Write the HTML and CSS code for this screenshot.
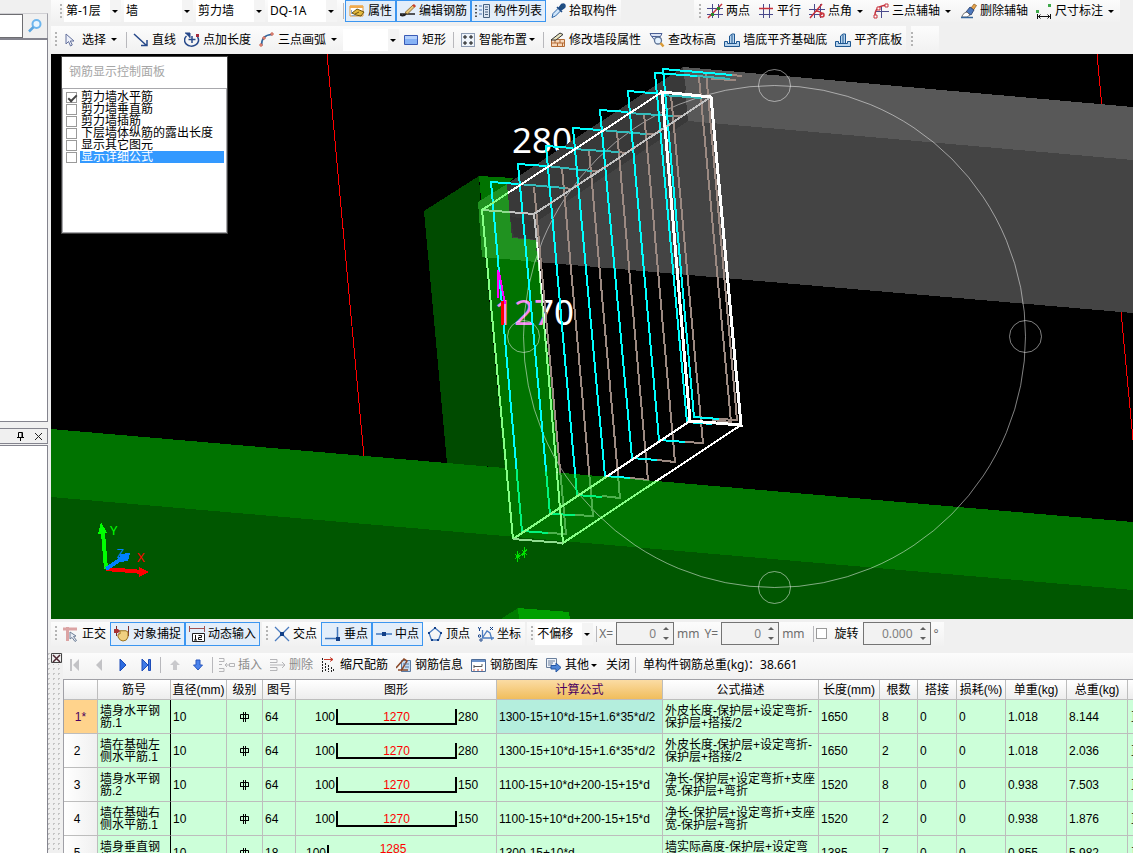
FILE: index.html
```html
<!DOCTYPE html>
<html lang="zh-CN">
<head>
<meta charset="utf-8">
<title>单构件钢筋</title>
<link rel="stylesheet" href="styles.css">
</head>
<body>
<div class="app">
  <aside class="side">
    <div class="search">
      <input type="text" aria-label="搜索">
      <button type="button" aria-label="查找"><svg class="ic" viewBox="0 0 16 16"><circle cx="9.500" cy="6" r="4" fill="#eaf6ff" stroke="#6db6ee" stroke-width="2"/><path d="M6.500 9 2 13.500" stroke="#5aa5e0" stroke-width="2.500"/></svg></button>
    </div>
    <div class="side-list"></div>
    <div class="side-head">
      <button type="button" aria-label="固定"><svg viewBox="0 0 9 9"><path d="M2.500 5V.500h4V5M1 5.500h7M4.500 6v3" stroke="#000" fill="none"/><path d="M6 1v4" stroke="#000" stroke-width="1"/></svg></button>
      <button type="button" aria-label="关闭面板"><svg viewBox="0 0 9 9"><path d="M1 1l7 7M8 1 1 8" stroke="#222" fill="none"/></svg></button>
    </div>
    <div class="side-body"></div>
  </aside>

  <main class="main">
    <div class="row row-top">
      <div class="bar bar-first">
        <i class="grip"></i>
        <span class="combo floor"><select aria-label="楼层"><option>第-1层</option></select></span>
        <span class="combo kind"><select aria-label="构件类"><option>墙</option></select></span>
        <span class="combo kind"><select aria-label="构件类型"><option>剪力墙</option></select></span>
        <span class="combo kind"><select aria-label="构件"><option>DQ-1A</option></select></span>
        <i class="sep"></i>
        <button type="button" class="on"><svg class="ic" viewBox="0 0 16 16"><path d="M1 3h13v10H1z" fill="#fff" stroke="#e39a3b"/><path d="M1 2.500h13v2.500H1z" fill="#f2ab4c"/><path d="M2.500 7v4M2.500 12.500h4" stroke="#8aa6c8"/><path d="M3 10l5-4 7 3-3 4-5-1z" fill="#e4b93c" stroke="#6b5310"/><path d="M6 11l4-2" stroke="#6b5310"/></svg>属性</button>
        <button type="button" class="on"><svg class="ic" viewBox="0 0 16 16"><path d="M0 11h15M0 12q4 2 7-2" stroke="#222" fill="none" stroke-width="1.500"/><path d="M5 9.500 13 2l2 1.500L7.500 11z" fill="#e9c774" stroke="#7b5a22" stroke-width=".8"/><path d="M12 2.500l2-1.500 2 2-1.500 1.500z" fill="#c8402c"/></svg>编辑钢筋</button>
        <button type="button" class="on"><svg class="ic" viewBox="0 0 16 16"><path d="M1 2v12" stroke="#555" stroke-width="2" stroke-dasharray="1.500 2"/><path d="M4 3h3M4 7h3M4 11h3" stroke="#4b77b5"/><path d="M8.500 1.500h6v13h-6z" fill="#dce6f3" stroke="#47617f"/><path d="M10 4h3M10 6.500h3M10 9h3M10 11.500h3" stroke="#47617f"/></svg>构件列表</button>
        <button type="button"><svg class="ic" viewBox="0 0 16 16"><path d="M2 14.500l1-4L8.500 5l2.500 2.500L5.500 13z" fill="#cfe5fa" stroke="#2c66a8"/><path d="M7 4l5 5M9 5l2.500-3.500q2-1 3 0 1 1.500 0 3L11 7z" fill="#22507f" stroke="#1d4b86" stroke-width="1.500"/></svg>拾取构件</button>
      </div>
      <div class="bar">
        <i class="grip"></i>
        <button type="button"><svg class="ic" viewBox="0 0 16 16"><path d="M5.500 1v14M11.500 1v14M0 5.500h16M0 11.500h16" stroke="#4a4a8c"/><path d="M1 15 15 1" stroke="#c8323c" stroke-width="1.500"/><path d="M4 10h3v3H4zM10 4h3v3h-3z" fill="#2c8a2c"/></svg>两点</button>
        <button type="button"><svg class="ic" viewBox="0 0 16 16"><path d="M5.500 1v14M11.500 1v14" stroke="#4a4a8c"/><path d="M1 5.500h14" stroke="#c8323c" stroke-width="1.500"/><path d="M1 11.500h14" stroke="#4a4a8c"/></svg>平行</button>
        <button type="button" class="drop"><svg class="ic" viewBox="0 0 16 16"><path d="M5.500 1v14M11.500 1v14M0 6.500h16M0 11.500h11" stroke="#4a4a8c"/><path d="M1 15 13 1M7 8q5 0 6 4" stroke="#c8323c" stroke-width="1.500" fill="none"/><circle cx="13" cy="12" r="2" fill="none" stroke="#c8323c" stroke-width="1.500"/></svg>点角</button>
        <button type="button" class="drop"><svg class="ic" viewBox="0 0 16 16"><path d="M8.500 3v12M3 8.500h13" stroke="#4a4a8c"/><path d="M2 14Q1 3 14 2" stroke="#c8323c" stroke-width="1.500" fill="none"/><path d="M1 12h3v3H1zM4 4h3v3H4zM12 1h3v3h-3z" fill="#fff" stroke="#c8323c"/></svg>三点辅轴</button>
        <button type="button"><svg class="ic" viewBox="0 0 16 16"><path d="M10 5l3-4 2.500 1.500L12.500 7z" fill="#e5a24c" stroke="#8b5a1c" stroke-width=".7"/><path d="M5 9l4-5 4 3-3 5z" fill="#4d78bd" stroke="#243a66" stroke-width=".8"/><path d="M1 13q2-4 5-4l3 3q-2 3-8 2z" fill="#fff" stroke="#555" stroke-width=".8"/><path d="M0 14.500h12" stroke="#35659b" stroke-width="1.500"/></svg>删除辅轴</button>
        <button type="button" class="drop"><svg class="ic" viewBox="0 0 16 16"><path d="M12 1h3v3h-3zM0 7h3v3H0z" fill="#3fa94a"/><path d="M1.500 11v5M14.500 11v5M2 13.500h12M4.500 11.500l-2 2 2 2M11.500 11.500l2 2-2 2" stroke="#111" fill="none"/></svg>尺寸标注</button>
      </div>
    </div>

    <div class="row row-draw">
      <div class="bar">
        <i class="grip"></i>
        <button type="button" class="drop"><svg class="ic" viewBox="0 0 16 16"><path d="M3 2v10l2.500-2.500 2 4.500 1.800-1-2-4H11z" fill="#eef1fa" stroke="#63709c"/></svg>选择</button>
        <i class="sep"></i>
        <button type="button"><svg class="ic" viewBox="0 0 16 16"><path d="M1 2l12 11M8 13.500h6V8" stroke="#27498a" stroke-width="1.500" fill="none"/></svg>直线</button>
        <button type="button"><svg class="ic" viewBox="0 0 16 16"><path d="M8 4v7M4.500 7.500h7M13.500 5a7 6 0 1 1-11-1" stroke="#27498a" stroke-width="1.500" fill="none"/><path d="M1 1h5v5" stroke="#27498a" fill="#27498a"/><path d="M12 2h3v3h-3z" fill="#a52a3c"/></svg>点加长度</button>
        <button type="button" class="drop"><svg class="ic" viewBox="0 0 16 16"><path d="M2.500 14Q2 3 13 2.500" stroke="#34689e" stroke-width="1.500" fill="none"/><path d="M1 12h2v2H1zM4 5h2v2H4zM12 1h2v2h-2z" fill="#fff" stroke="#c8503c"/></svg>三点画弧</button>
        <span class="combo blank"><select aria-label="绘制选项"><option></option></select></span>
        <button type="button"><svg class="ic" viewBox="0 0 16 16"><path d="M1.500 3.500h13v9h-13z" fill="#86b2f5" stroke="#3a5bb5"/><path d="M2 4h12v3H2z" fill="#b4d0fb"/></svg>矩形</button>
        <i class="sep"></i>
        <button type="button" class="drop tight"><svg class="ic" viewBox="0 0 16 16"><path d="M1.500 1.500h13v13h-13z" fill="#eef4fb" stroke="#27406d" stroke-dasharray="1 1"/><path d="M5 3v4M3 5h4M11 3v4M9 5h4M5 9v4M3 11h4M11 9v4M9 11h4" stroke="#111"/></svg>智能布置</button>
        <i class="sep"></i>
        <button type="button"><svg class="ic" viewBox="0 0 16 16"><path d="M1.500 7.500h13v7h-13z" fill="#f7d9bd" stroke="#b36a35"/><path d="M1 11h14M5 8v3M10 8v3M7.500 11v4M12.500 11v4" stroke="#b36a35"/><path d="M1 8 10 1l3 1.500L6 8z" fill="#e9e4c0" stroke="#333"/></svg>修改墙段属性</button>
        <button type="button"><svg class="ic" viewBox="0 0 16 16"><path d="M1 1.500h12l-1.500 3H2.500zM3 5l3.500 4L9 5" fill="#dce4f5" stroke="#4a5f95"/><circle cx="9" cy="8.500" r="3.500" fill="#e5f2ff" stroke="#5d7396" stroke-width="1.300"/><path d="M11.500 11l3 3.500" stroke="#d99a35" stroke-width="2.500"/></svg>查改标高</button>
        <button type="button"><svg class="ic" viewBox="0 0 16 16"><path d="M5.500 11V4L8 2h2.500v9M.500 9.500h3v2h9v-2h3v5H.500z" fill="#b8d4ee" stroke="#1d5690"/><path d="M8 3v8" stroke="#1d5690"/></svg>墙底平齐基础底</button>
        <button type="button"><svg class="ic" viewBox="0 0 16 16"><path d="M5.500 11V4L8 2h2.500v9M.500 9.500h3v2h9v-2h3v5H.500z" fill="#b8d4ee" stroke="#1d5690"/><path d="M8 3v8" stroke="#1d5690"/></svg>平齐底板</button>
      </div>
      <div class="bar stub"><i class="grip"></i></div>
    </div>

    <section class="view">
      <svg class="scene" viewBox="51 54 1082 565" preserveAspectRatio="xMinYMin slice" shape-rendering="crispEdges">
        <defs>
          <clipPath id="ground"><path d="M51 429 1133 522V619H51z"/></clipPath>
          <clipPath id="greens"><path d="M51 429 1133 522V619H51zM478 211 507 184 512 238 536 240 560 472 500 470z"/></clipPath>
          <linearGradient id="split" gradientUnits="userSpaceOnUse" x1="543" y1="0" x2="544" y2="0"><stop offset="0" stop-color="#f48af0"/><stop offset="1" stop-color="#fff"/></linearGradient>
        </defs>
        <rect x="51" y="54" width="1082" height="565" fill="#000"/>
        <path d="M327 54 364 457M1097 54 1133 440" class="axis-line"/>
        <path d="M51 429 1133 522V619H51z" fill="#007300"/>
        <path d="M51 497 1133 590V619H51z" fill="#005700"/>
        <path d="M424 211 479 176 481 210 505 468 447 463z" fill="#004b00"/>
        <path d="M479 176 514 178 507 184 512 238 536 240 561 474 505 470z" fill="#007300"/>
        <path d="M501 619 518 608 519 619z" fill="#007c00"/>
        <path d="M518 608 569 612 570 619H519z" fill="#00a000"/>
        <path d="M683 67 1133 107V160L688 121z" fill="#585858"/>
        <path d="M688 121 1133 160V313L537 262 535 240 512 238z" fill="#444"/>
        <path d="M507 184 683 67 688 121 512 238z" fill="#393939"/>
        <path d="M514 237 510 216 536 222 537 240z" fill="#343434"/>
        <path d="M478 202 507 184 512 238 536 240 537 262 482 257z" fill="#209220"/>
        <g class="digits" shape-rendering="auto">
          <text x="512" y="153" fill="#fff">280</text>
          <text x="494" y="325" fill="url(#split)">1270</text>
        </g>
        <path d="M507 184 683 67 686 90 535 190z" fill="#393939"/>
        <g class="orbit" shape-rendering="auto">
          <circle cx="774.500" cy="336.500" r="251"/><circle cx="774.500" cy="85.500" r="16"/><circle cx="1025.500" cy="336.500" r="16"/><circle cx="774.500" cy="587.500" r="16"/><circle cx="523.500" cy="336.500" r="16"/>
        </g>
        <g id="bars" class="bars">
          <path class="back" d="M534 187 566 534 548 533M562 168 593 516 575 515M589 150 620 498 602 496M617 132 648 480 630 478M644 113 675 462 657 460M671 95 703 443 685 442M699 77 731 422 712 420M706 72 737 420 719 419M565 188 571 189M592 171 598 171M619 152 625 153M646 134 654 134M673 116 681 116M732 75 742 76M711 79 736 80"/>
          <path class="dim" d="M518 184 565 188M546 166 592 171M573 149 619 152M600 130 646 134M628 113 673 116M662 95 702 98M697 76 730 79"/>
          <path class="front" d="M518 184 491 182 522 531 548 533M546 166 518 164 550 514 575 515M573 148 546 146 577 495 602 497M600 130 573 128 605 476 630 478M628 112 600 110 632 458 657 460M662 94 628 91 659 440 685 442M697 76 655 73 687 422 712 424M732 75 663 69 694 417 719 419"/>
        </g>
        <use href="#bars" class="bars-low" clip-path="url(#ground)"/>
        <g id="box" class="box">
          <path class="soft" d="M482 210 534 214 711 97M534 214 537 242"/>
          <path d="M513 539 482 210 662 92M537 242 563 543 741 425M513 539 690 421"/>
          <path class="bold" d="M662 92 711 97 741 425 690 421z"/>
          <path class="soft" d="M513 539 563 543"/>
        </g>
        <use href="#box" class="box-low" clip-path="url(#greens)"/>
        <path d="M498 270V298M499 272 505 304" stroke="#f0f" stroke-width="2" fill="none"/>
        <path d="M502 301 503 325" stroke="#f00" stroke-width="3"/>
        <path d="M515 554l5 5M520 553l-5 6M517.500 551v11M517 558l8-6M522 550l5 5M527 549l-5 7M524.500 547v11" stroke="#00e000" fill="none"/>
        <g class="triad">
          <path d="M106 569 103 533" stroke="#0f0" stroke-width="4"/><path d="M101 522 107 533 98 534z" fill="#0f0"/>
          <path d="M106 569 143 572" stroke="#f00" stroke-width="4"/><path d="M139 567 149 572 139 577z" fill="#f00"/>
          <path d="M106 569 124 557" stroke="#0080ff" stroke-width="4"/><path d="M120 554 130 553 128 561 120 562z" fill="#0080ff"/>
          <text x="110" y="535" fill="#0f0">Y</text><text x="117" y="558" fill="#0080ff">Z</text><text x="137" y="562" fill="#f00">X</text>
        </g>
      </svg>
      <div class="panel">
        <h2>钢筋显示控制面板</h2>
        <div class="checks">
          <label><input type="checkbox" checked><span>剪力墙水平筋</span></label>
          <label><input type="checkbox"><span>剪力墙垂直筋</span></label>
          <label><input type="checkbox"><span>剪力墙插筋</span></label>
          <label><input type="checkbox"><span>下层墙体纵筋的露出长度</span></label>
          <label><input type="checkbox"><span>显示其它图元</span></label>
          <label class="sel"><input type="checkbox"><span>显示详细公式</span></label>
        </div>
      </div>
    </section>

    <div class="row row-snap">
      <div class="bar">
        <i class="grip"></i>
        <button type="button"><svg class="ic" viewBox="0 0 16 16"><path d="M0 3h14M4.500 1v14" stroke="#dba3a3" stroke-width="3"/><path d="M7 6v7l2-1.500 3 4 1.500-1-3-4L13 10z" fill="#e8edf5" stroke="#6e7e96"/></svg>正交</button>
        <button type="button" class="on"><svg class="ic" viewBox="0 0 16 16"><path d="M2.500 0v10M14.500 0v10M0 5h6" stroke="#7a3030"/><path d="M0 3h4l2 2-2 2H0z" fill="#a33"/><path d="M4 9q0-2 2-1V5q1-1 2 0 1-1 2 0 1-1 2 0 2 0 2 2v4q-1 4-5 4-3 0-5-4z" fill="#f0d080" stroke="#9c7420"/></svg>对象捕捉</button>
        <button type="button" class="on"><svg class="ic" viewBox="0 0 16 16"><path d="M.500 0v6M15.500 0v6M1 2.500h14" stroke="#a05050"/><path d="M3.500 7.500h12v8h-12z" fill="#fff" stroke="#222"/><path d="M6.500 9v5M5 14h3M9.500 9.500h3v2h-3v2H13" stroke="#111" fill="none"/></svg>动态输入</button>
      </div>
      <div class="bar">
        <i class="grip"></i>
        <button type="button"><svg class="ic" viewBox="0 0 16 16"><path d="M1 1l14 14M15 1 1 15" stroke="#4b7cc0" stroke-width="1.300"/><path d="M6 6h4v4H6z" fill="#123f87"/></svg>交点</button>
        <button type="button" class="on"><svg class="ic" viewBox="0 0 16 16"><path d="M12.500 1v11M0 12.500h15" stroke="#3f76bc" stroke-width="1.500"/><path d="M11 11h4v4h-4z" fill="#123f87"/></svg>垂点</button>
        <button type="button" class="on"><svg class="ic" viewBox="0 0 16 16"><path d="M0 8h16" stroke="#3f76bc" stroke-width="1.500"/><path d="M6 6h4v4H6z" fill="#123f87"/></svg>中点</button>
        <button type="button"><svg class="ic" viewBox="0 0 16 16"><path d="M8 2l6 5-2.500 7h-7L2 7z" fill="none" stroke="#4b7cc0" stroke-width="1.300"/><path d="M7 1h2v2H7zM1 6h2v2H1zM13 6h2v2h-2zM4 13h2v2H4zM10 13h2v2h-2z" fill="#123f87"/></svg>顶点</button>
        <button type="button"><svg class="ic" viewBox="0 0 16 16"><path d="M4.500 4v8H16M5 11l4-6 3 2 2 7" stroke="#4b7cc0" fill="none" stroke-width="1.300"/><path d="M0 1l1.500 2L3 1M1.500 3v2M12 1l3 3M15 1l-3 3" stroke="#123f87" fill="none"/><circle cx="1.500" cy="10" r="1.200" fill="none" stroke="#123f87"/><circle cx="3" cy="14" r="1.200" fill="none" stroke="#123f87"/></svg>坐标</button>
      </div>
      <div class="bar">
        <i class="grip"></i>
        <span class="combo shift"><select aria-label="偏移方式"><option>不偏移</option></select></span>
        <i class="sep"></i>
        <label class="num">X=<span class="spin"><input type="text" value="0"></span>mm</label>
        <label class="num">Y=<span class="spin"><input type="text" value="0"></span>mm</label>
        <i class="sep"></i>
        <label class="rot"><input type="checkbox"><span>旋转</span></label>
        <label class="num"><span class="spin wide"><input type="text" value="0.000" aria-label="旋转角度"></span>°</label>
      </div>
    </div>

    <section class="dock">
      <div class="dock-grip"><button type="button" aria-label="关闭"><svg viewBox="0 0 11 11"><path d="M.500.500h10v9H.500z" fill="#eee" stroke="#444"/><path d="M2 2l7 7M9 2 2 9" stroke="#4b2630" stroke-width="1.500"/></svg></button></div>
      <div class="dock-main">
        <div class="bar edit">
          <button type="button" disabled aria-label="首行"><svg class="ic" viewBox="0 0 16 16"><path d="M3 2h2v12H3zM12 2v12L6 8z" fill="#c3c3c6"/></svg></button>
          <button type="button" disabled aria-label="上一行"><svg class="ic" viewBox="0 0 16 16"><path d="M11 2v12L5 8z" fill="#c3c3c6"/></svg></button>
          <button type="button" aria-label="下一行"><svg class="ic" viewBox="0 0 16 16"><path d="M5 2v12l6-6z" fill="#2d6ce0" stroke="#1c4bb8"/></svg></button>
          <button type="button" aria-label="末行"><svg class="ic" viewBox="0 0 16 16"><path d="M3 2v12l6-6zM9.500 2.500h2v11h-2z" fill="#3f7ae6" stroke="#1c4bb8"/></svg></button>
          <i class="sep"></i>
          <button type="button" disabled aria-label="上移"><svg class="ic" viewBox="0 0 16 16"><path d="M8 3l5 5h-3v5H6V8H3z" fill="#c9c9cc"/></svg></button>
          <button type="button" aria-label="下移"><svg class="ic" viewBox="0 0 16 16"><path d="M7 13l4.500-5H9V3H5v5H2.500z" fill="#4b83ec" stroke="#2857be"/></svg></button>
          <i class="sep"></i>
          <button type="button" disabled><svg class="ic" viewBox="0 0 16 16"><path d="M0 1.500h5v3H0M0 7.500h3M0 11.500h5v3H0M6 8h5M6 8l2-2M6 8l2 2M10.500 6.500h5v3h-5z" stroke="#b5b5b8" fill="none"/></svg>插入</button>
          <button type="button" disabled><svg class="ic" viewBox="0 0 16 16"><path d="M0 2.500h7v3H0M0 10.500h7v3H0M0 8h15M12 5l3 3-3 3" stroke="#b5b5b8" fill="none"/></svg>删除</button>
          <button type="button"><svg class="ic" viewBox="0 0 16 16"><path d="M1.500 1v14M4.500 6v9M7.500 8v7M10.500 10v5M12.500 12v3" stroke="#222" stroke-dasharray="2 1"/><path d="M3 2.500h9M9 .500l3 2-3 2" stroke="#c63a2a" fill="none"/></svg>缩尺配筋</button>
          <button type="button"><svg class="ic" viewBox="0 0 16 16"><path d="M5.500 3.500h9v11h-9z" fill="#c5dcf2" stroke="#5a7ba5"/><path d="M0 11 8 2l3 2-6 10M2 13h10" fill="none" stroke="#8b4a2a" stroke-width="1.500"/><path d="M7 7h6M9 10h4" stroke="#5a7ba5"/></svg>钢筋信息</button>
          <button type="button"><svg class="ic" viewBox="0 0 16 16"><path d="M.500 2.500h14v12H.500z" fill="#fff" stroke="#4f6d98"/><path d="M1 3h13v2H1z" fill="#6b93cc"/><path d="M3 8v3M3 9.500h8V7" stroke="#555" fill="none"/><path d="M2 13h11" stroke="#c8503c" stroke-dasharray="2 2"/></svg>钢筋图库</button>
          <button type="button" class="drop tight"><svg class="ic" viewBox="0 0 16 16"><path d="M.500 1.500h10v9h-10z" fill="#eef3fa" stroke="#6a7f9c"/><path d="M2 4h7M2 6h5M2 8h4" stroke="#6a7f9c"/><path d="M5 8.500h5V6l5 4.500-5 4.500v-3H5z" fill="#4f86d8" stroke="#2456a3"/></svg>其他</button>
          <button type="button">关闭</button>
          <i class="sep"></i>
          <span class="total">单构件钢筋总重(kg)：38.661</span>
        </div>
        <div class="grid">
          <table>
            <colgroup><col class="c34"><col class="c73"><col class="c56"><col class="c36"><col class="c33"><col class="c201"><col class="c166"><col class="c156"><col class="c61"><col class="c38"><col class="c39"><col class="c49"><col class="c61"><col class="c61"><col class="c90"></colgroup>
            <thead><tr><th></th><th>筋号</th><th>直径(mm)</th><th>级别</th><th>图号</th><th>图形</th><th class="hot">计算公式</th><th>公式描述</th><th>长度(mm)</th><th>根数</th><th>搭接</th><th>损耗(%)</th><th>单重(kg)</th><th>总重(kg)</th><th></th></tr></thead>
            <tbody>
              <tr><th class="cur">1*</th><td class="name">墙身水平钢<br>筋.1</td><td>10</td><td class="mid"><svg class="phi" viewBox="0 0 9 10"><path d="M3.500 0v10M5.500 0v10M.500 2.500h8M0 6.500h9M.500 2.500v4M8.500 2.500v4"/></svg></td><td>64</td><td><div class="shape"><span>100</span><b>1270</b><span>280</span></div></td><td class="focus">1300-15+10*d-15+1.6*35*d/2</td><td>外皮长度-保护层+设定弯折-<br>保护层+搭接/2</td><td>1650</td><td>8</td><td>0</td><td>0</td><td>1.018</td><td>8.144</td><td class="cut">直筋</td></tr>
              <tr><th>2</th><td class="name">墙在基础左<br>侧水平筋.1</td><td>10</td><td class="mid"><svg class="phi" viewBox="0 0 9 10"><path d="M3.500 0v10M5.500 0v10M.500 2.500h8M0 6.500h9M.500 2.500v4M8.500 2.500v4"/></svg></td><td>64</td><td><div class="shape"><span>100</span><b>1270</b><span>280</span></div></td><td>1300-15+10*d-15+1.6*35*d/2</td><td>外皮长度-保护层+设定弯折-<br>保护层+搭接/2</td><td>1650</td><td>2</td><td>0</td><td>0</td><td>1.018</td><td>2.036</td><td class="cut">直筋</td></tr>
              <tr><th>3</th><td class="name">墙身水平钢<br>筋.2</td><td>10</td><td class="mid"><svg class="phi" viewBox="0 0 9 10"><path d="M3.500 0v10M5.500 0v10M.500 2.500h8M0 6.500h9M.500 2.500v4M8.500 2.500v4"/></svg></td><td>64</td><td><div class="shape"><span>100</span><b>1270</b><span>150</span></div></td><td>1100-15+10*d+200-15+15*d</td><td>净长-保护层+设定弯折+支座<br>宽-保护层+弯折</td><td>1520</td><td>8</td><td>0</td><td>0</td><td>0.938</td><td>7.503</td><td class="cut">直筋</td></tr>
              <tr><th>4</th><td class="name">墙在基础右<br>侧水平筋.1</td><td>10</td><td class="mid"><svg class="phi" viewBox="0 0 9 10"><path d="M3.500 0v10M5.500 0v10M.500 2.500h8M0 6.500h9M.500 2.500v4M8.500 2.500v4"/></svg></td><td>64</td><td><div class="shape"><span>100</span><b>1270</b><span>150</span></div></td><td>1100-15+10*d+200-15+15*d</td><td>净长-保护层+设定弯折+支座<br>宽-保护层+弯折</td><td>1520</td><td>2</td><td>0</td><td>0</td><td>0.938</td><td>1.876</td><td class="cut">直筋</td></tr>
              <tr><th>5</th><td class="name">墙身垂直钢<br>筋.1</td><td>10</td><td class="mid"><svg class="phi" viewBox="0 0 9 10"><path d="M3.500 0v10M5.500 0v10M.500 2.500h8M0 6.500h9M.500 2.500v4M8.500 2.500v4"/></svg></td><td>18</td><td><div class="shape ell"><span>100</span><b>1285</b></div></td><td>1300-15+10*d</td><td>墙实际高度-保护层+设定弯<br>折</td><td>1385</td><td>7</td><td>0</td><td>0</td><td>0.855</td><td>5.982</td><td class="cut">直筋</td></tr>
            </tbody>
          </table>
        </div>
      </div>
    </section>
  </main>
</div>
</body>
</html>
```

FILE: styles.css
```css
* { box-sizing: border-box; }
html, body { height: 100%; margin: 0; }
body {
  background: #f0f0f0;
  color: #000;
  font: 12px/16px "Noto Sans", "Noto Sans CJK SC", sans-serif;
  overflow: hidden;
}
button, input, select { font: inherit; color: inherit; margin: 0; }
button { background: none; border: 0; padding: 0; }
.app { display: flex; height: 100vh; }

/* left dock */
.side { flex: 0 0 48px; min-width: 0; display: flex; flex-direction: column; padding-top: 13px; }
.search { display: flex; height: 25px; border-right: 1px solid #a0a0a8; border-top: 1px solid #d0d0d4; }
.search input { flex: 1; width: 0; min-width: 0; border: 1px solid #6e6e72; border-left: 0; background: #fff; }
.search button { flex: 0 0 24px; display: grid; place-items: center; }
.side-list { flex: 0 0 384px; background: #fff; border: 1px solid #84848e; border-left: 0; border-top-width: 2px; }
.side-head { display: flex; align-items: center; justify-content: flex-end; gap: 9px; height: 16px; margin-top: 6px; padding-right: 4px; border: 1px solid #84848e; border-left: 0; }
.side-head svg { display: block; width: 9px; height: 9px; }
.side-body { flex: 1; margin-top: 1px; background: #fff; border: 1px solid #84848e; border-left: 0; border-bottom: 0; }

.main { flex: 1; min-width: 0; display: flex; flex-direction: column; }
.row { display: flex; padding-left: 3px; flex: none; }
.row-top { height: 26px; justify-content: space-between; padding-right: 13px; }
.row-top .bar { height: 22px; }
.row-top .bar-first { padding-left: 9px; }
.row-top .on { border-top-color: transparent; }
.row-draw { height: 28px; padding-bottom: 1px; gap: 5px; }
.row-draw .bar { padding-left: 4px; }
.row-snap { height: 30px; padding-bottom: 1px; gap: 2px; align-items: center; }
.row-snap .bar { height: 24px; padding-left: 4px; }

.bar { display: flex; align-items: center; padding-left: 5px; background: linear-gradient(#fcfcfc, #f1f1f1); white-space: nowrap; }
.bar > * { flex: none; }
.grip { width: 2px; height: 15px; margin-right: 2px; background: repeating-linear-gradient(#b4b4b4 0 2px, transparent 2px 4px); }
.sep { width: 1px; height: 16px; margin: 0 2px 0 3px; background: #b8b8bc; }
.row-top .sep { margin: 0 1px 0 3px; }
.bar button { display: flex; align-items: center; gap: 3px; height: 100%; padding: 0 3px; border: 1px solid transparent; }
.bar button.on { background: #e3eefa; border-color: #3c96f0; }
.bar button:disabled { color: #8c8c8c; }
.ic { display: block; width: 16px; height: 16px; }
.drop::after { content: ""; border: 3px solid transparent; border-top-color: #000; border-bottom: 0; margin: 0 2px; }
.bar .tight::after { margin: 0 1px 0 -1px; }
.row-draw .stub { width: 28px; padding-left: 0; }

.combo { position: relative; height: 22px; background: #fff; }
.combo select { appearance: none; width: 100%; height: 100%; padding: 0 0 0 2px; border: 0; background: linear-gradient(#f4f4f4, #f4f4f4) right / 11px 100% no-repeat #fff; }
.combo::after { content: ""; position: absolute; right: 3px; top: 10px; border: 3px solid transparent; border-top-color: #000; border-bottom: 0; pointer-events: none; }
.floor { width: 57px; margin-right: 3px; }
.kind { width: 69px; margin-right: 3px; }
.blank { width: 56px; }
.shift { width: 58px; }

.num { display: flex; align-items: center; gap: 3px; margin-right: 5px; color: #6d6d6d; }
.spin { position: relative; width: 58px; height: 23px; }
.spin.wide { width: 68px; }
.spin input { width: 100%; height: 100%; padding: 0 17px 0 0; border: 1px solid #747474; background: #f2f2f2; color: #808080; text-align: right; }
.spin::before, .spin::after { content: ""; position: absolute; right: 5px; border: 3px solid transparent; }
.spin::before { top: 5px; border-bottom-color: #606060; border-top: 0; }
.spin::after { bottom: 5px; border-top-color: #606060; border-bottom: 0; }
.rot { display: flex; align-items: center; gap: 8px; margin-right: 4px; }
.rot input, .checks input { appearance: none; width: 11px; height: 11px; border: 1px solid #9a9a9a; background: #fff; }

/* 3D view */
.view { position: relative; flex: 1; min-height: 0; margin-left: 3px; overflow: hidden; background: #000; }
.scene { display: block; width: 100%; height: 100%; }
.axis-line { stroke: #f00; fill: none; }
.digits { font: 35px "Noto Sans", sans-serif; }
.orbit { fill: none; stroke: #fff; stroke-opacity: .5; }
.bars { fill: none; stroke-width: 2; }
.bars .front { stroke: var(--low-front, #0ff); }
.bars .dim { stroke: #3bb; }
.bars .back { stroke: var(--low-back, #9c8a82); }
.bars-low { --low-front: #00f57d; --low-back: #4db04d; }
.box { fill: none; stroke: var(--low-line, #fff); stroke-width: 2; }
.box .bold { stroke-width: 3; }
.box .soft { stroke: var(--low-soft, #c2c2c2); }
.box-low { --low-line: #86ff86; --low-soft: #90dc90; }
.triad text { font: 13px "Noto Sans", sans-serif; }

.panel { position: absolute; left: 10px; top: 2px; width: 167px; height: 178px; display: flex; flex-direction: column; background: #fff; border: 1px solid #444; }
.panel h2 { margin: 0; height: 31px; padding: 7px; font-size: 12px; line-height: 16px; font-weight: 400; color: #a6a6a6; }
.checks { flex: 1; padding: 2px; border: 1px solid #82828a; outline: 1px solid #a8a8ac; outline-offset: -1px; }
.checks label { display: flex; align-items: center; gap: 3px; height: 12px; padding-left: 1px; line-height: 12px; }
.checks input { flex: none; position: relative; }
.checks input:checked::after { content: ""; position: absolute; left: 3px; top: 0; width: 3px; height: 7px; border: solid #444; border-width: 0 2px 2px 0; transform: rotate(45deg); }
.checks span { flex: 1; padding-left: 1px; }
.checks .sel span { background: #39f; color: #fff; }

/* rebar table dock */
.dock { flex: none; display: flex; padding-top: 4px; }
.dock-grip { flex: 0 0 15px; min-width: 0; padding-left: 3px; background: radial-gradient(circle, #c4c4c4 1px, transparent 1px) 3px 3px / 5px 5px; }
.dock-grip button { display: block; width: 11px; background: #f0f0f0; }
.dock-grip svg { display: block; width: 11px; height: 11px; }
.dock-main { flex: 1; min-width: 0; }
.edit { height: 26px; padding: 0 0 2px; }
.edit .sep { margin: 0 2px 0 1px; }
.total { margin-left: 5px; }
.grid { height: 174px; overflow: hidden; border-left: 1px solid #a0a0a6; border-top: 1px solid #a0a0a6; }
table { width: 1154px; min-width: 100%; table-layout: fixed; border-collapse: separate; border-spacing: 0; font: 12px/12px "Liberation Sans", "Noto Sans CJK SC", sans-serif; }
.c33 { width: 33px; } .c34 { width: 34px; } .c36 { width: 36px; } .c38 { width: 38px; } .c39 { width: 39px; }
.c49 { width: 49px; } .c56 { width: 56px; } .c61 { width: 61px; } .c73 { width: 73px; } .c90 { width: 90px; }
.c156 { width: 156px; } .c166 { width: 166px; } .c201 { width: 201px; }
th, td { padding: 0; border-right: 1px solid #bdbdbd; border-bottom: 1px solid #bdbdbd; white-space: nowrap; font-weight: 400; }
thead th { height: 20px; background: linear-gradient(#fff, #ededed); }
tbody th { height: 34px; padding-right: 7px; background: linear-gradient(90deg, #fff, #f0f0f0); }
tbody .cur { padding-right: 0; background: #ffd38c; color: #4b0060; }
thead .hot { background: linear-gradient(#fbdca4, #f0bd5c); color: #4b0060; }
td { height: 34px; padding: 0 0 0 2px; background: #ccffd9; }
td.name { border-right-color: #000; }
td.mid { padding: 0; text-align: center; }
td.focus { background: #b4eedd; }
td.cut { padding-left: 3px; }
.phi { display: inline-block; width: 9px; height: 10px; fill: none; stroke: #000; vertical-align: middle; }
.shape { display: flex; align-items: center; gap: 1px; padding-left: 17px; }
.shape b { width: 121px; height: 16px; border: solid #000; border-width: 0 2px 2px; color: #f00; font-weight: 400; text-align: center; line-height: 16px; }
.ell { padding-left: 8px; }
.ell b { width: 130px; border-right: 0; line-height: 8px; }
```
